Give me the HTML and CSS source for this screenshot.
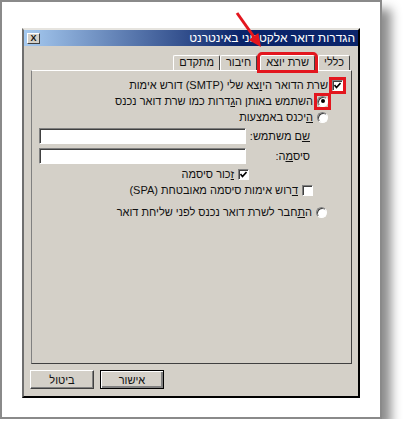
FILE: index.html
```html
<!DOCTYPE html>
<html lang="he">
<head>
  <meta charset="UTF-8" />
  <meta name="viewport" content="width=device-width, initial-scale=1" />
  <title>הגדרות דואר אלקטרוני באינטרנט</title>
  <link rel="stylesheet" href="styles.css">
</head>
<body>

  <div class="frame">

    <!-- red arrow pointing to the tab -->
    <svg class="arrow" width="44" height="48" viewBox="0 0 44 48">
      <line x1="9" y1="7" x2="26" y2="31" stroke="#e3161e" stroke-width="3" />
      <polygon points="33,41 20.6,33.9 30.4,26.9" fill="#e3161e" />
    </svg>

    <div class="dialog" dir="rtl">
      <div class="titlebar">
        <span class="title">הגדרות דואר אלקטרוני באינטרנט</span>
        <span class="close">X</span>
      </div>

      <div class="tabs">
        <span class="tab">כללי</span>
        <span class="tab active marked">שרת יוצא</span>
        <span class="tab">חיבור</span>
        <span class="tab">מתקדם</span>
      </div>

      <div class="panel">
        <div class="row r1">
          <span class="marked"><span class="check"><svg width="7" height="7" viewBox="0 0 7 7"><polyline points="0.5,3 2.5,5.5 6.5,1" fill="none" stroke="#000" stroke-width="1.6" /></svg></span></span>
          <span>שרת הדואר הי<u>ו</u>צא שלי (SMTP) דורש אימות</span>
        </div>
        <div class="row r2">
          <span class="marked"><span class="radio on"></span></span>
          <span>השתמש באותן ה<u>ג</u>דרות כמו שרת דואר נכנס</span>
        </div>
        <div class="row r3">
          <span class="radio"></span>
          <span><u>ה</u>יכנס באמצעות</span>
        </div>
        <div class="row r4">
          <span class="lbl"><u>ש</u>ם משתמש:</span>
          <input class="field" type="text">
        </div>
        <div class="row r5">
          <span class="lbl">סיס<u>מ</u>ה:</span>
          <input class="field" type="password">
        </div>
        <div class="row r6">
          <span class="check"><svg width="7" height="7" viewBox="0 0 7 7"><polyline points="0.5,3 2.5,5.5 6.5,1" fill="none" stroke="#000" stroke-width="1.6" /></svg></span>
          <span><u>ז</u>כור סיסמה</span>
        </div>
        <div class="row r7">
          <span class="check"></span>
          <span><u>ד</u>רוש אימות סיסמה מאובטחת (SPA)</span>
        </div>
        <div class="row r8">
          <span class="radio"></span>
          <span>ה<u>ת</u>חבר לשרת דואר נכנס לפני שליחת דואר</span>
        </div>
      </div>

      <div class="buttons">
        <button class="btn default">אישור</button>
        <button class="btn">ביטול</button>
      </div>
    </div>
  </div>

</body>
</html>
```

FILE: styles.css
```css
body {
  margin: 0;
  background: #fff;
  font-family: "Liberation Sans", "DejaVu Sans", sans-serif;
  font-size: 11px;
  color: #111;
}
.frame {
  position: relative;
  box-sizing: border-box;
  width: 382px;
  height: 419px;
  padding: 26px 0 0 20px;
  border: 2px solid #8a8a8a;
  background: #fff;
  box-shadow: 9px 9px 10px rgba(0, 0, 0, .45);
}
.arrow {
  position: absolute;
  left: 226px;
  top: 4px;
  z-index: 5;
}
.dialog {
  box-sizing: border-box;
  width: 338px;
  height: 370px;
  background: #d4d0c8;
  border: 2px solid;
  border-color: #e6e4df #000 #000 #6f6f6f;
  display: flex;
  flex-direction: column;
}
.titlebar {
  height: 16px;
  display: flex;
  align-items: center;
  justify-content: space-between;
  padding: 0 3px;
  background: linear-gradient(to left, #0a246a 35%, #a6caf0);
}
.title {
  color: #fff;
  font-size: 12px;
}
.close {
  box-sizing: border-box;
  width: 13px;
  height: 11px;
  background: #d4d0c8;
  border: 1px solid;
  border-color: #fff #404040 #404040 #fff;
  font-size: 9px;
  font-weight: bold;
  line-height: 9px;
  text-align: center;
}
.tabs {
  display: flex;
  align-items: flex-end;
  height: 18px;
  margin: 6px 8px 0 7px;
}
.tab {
  box-sizing: border-box;
  height: 15px;
  padding: 0 5px;
  line-height: 13px;
  border: 1px solid;
  border-bottom: none;
  border-color: #fff #404040 transparent #fff;
  border-radius: 2px 2px 0 0;
}
.tab.active {
  margin: 3px 3px 0 3px;
  align-self: flex-start;
  position: relative;
  z-index: 2;
}
.marked {
  display: inline-flex;
  outline: 3px solid #e3161e;
}
.panel {
  flex: 1;
  margin: 0 6px 0 7px;
  border: 1px solid;
  border-color: #fff #404040 #404040 #808080;
}
.row {
  display: flex;
  align-items: center;
  gap: 4px;
  height: 16px;
  white-space: nowrap;
}
.r1 { margin: 6px 8px 0 0; }
.r2, .r3 { margin-right: 23px; }
.r4 { margin: 3px 41px 0 0; gap: 0; }
.r5 { margin: 4px 41px 0 0; gap: 0; }
.r6 { margin: 2px 102px 0 0; }
.r7 { margin-right: 38px; }
.r8 { margin: 6px 24px 0 0; }
.lbl {
  width: 64px;
}
.check, .radio {
  box-sizing: border-box;
  width: 11px;
  height: 11px;
  flex: none;
  background: #fff;
  border: 1px solid;
  border-color: #808080 #fff #fff #808080;
  box-shadow: inset 1px 1px #404040;
  display: flex;
  align-items: center;
  justify-content: center;
}
.radio {
  border-radius: 50%;
}
.radio.on::after {
  content: "";
  width: 4px;
  height: 4px;
  border-radius: 50%;
  background: #000;
}
.field {
  box-sizing: border-box;
  width: 207px;
  height: 16px;
  margin: 0;
  padding: 0;
  background: #fff;
  border: 1px solid;
  border-color: #808080 #fff #fff #808080;
  box-shadow: inset 1px 1px #404040;
}
.buttons {
  display: flex;
  justify-content: flex-end;
  gap: 6px;
  margin: 6px 7px 7px 6px;
}
.btn {
  box-sizing: border-box;
  width: 64px;
  height: 19px;
  padding: 0;
  font: inherit;
  color: #111;
  background: #d4d0c8;
  border: 1px solid;
  border-color: #fff #404040 #404040 #fff;
  box-shadow: inset -1px -1px #808080;
}
.btn.default {
  border: 1px solid #000;
  box-shadow: inset 1px 1px #fff, inset -2px -2px #808080;
}
```
